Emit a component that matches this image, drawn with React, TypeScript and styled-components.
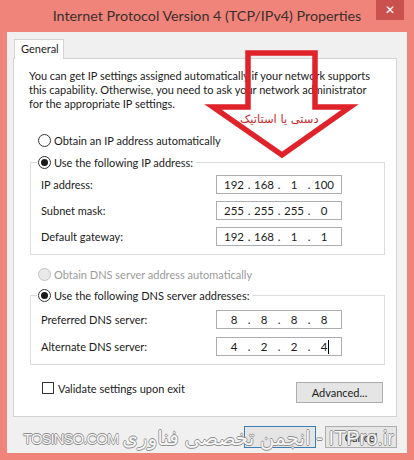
import styled, { createGlobalStyle } from 'styled-components';

const GlobalStyle = createGlobalStyle`
  html, body {
    margin: 0;
    padding: 0;
  }
  body {
    width: 414px;
    height: 460px;
    overflow: hidden;
    font-family: Lato, "Noto Sans", "DejaVu Sans", sans-serif;
    font-size: 11px;
    color: #1b1b1b;
  }
  * {
    box-sizing: border-box;
  }
`;

const Window = styled.div`
  position: relative;
  width: 414px;
  height: 460px;
  background: #f0847a;
  display: flex;
  flex-direction: column;
  padding: 0 7px 7px;
`;

const TitleBar = styled.div`
  height: 32px;
  margin: 0 -7px;
  display: flex;
  align-items: flex-start;
`;

const Title = styled.h1`
  flex: 1;
  min-width: 0;
  margin: 0;
  padding-left: 38px;
  text-align: center;
  font-size: 14.3px;
  font-weight: normal;
  line-height: 32px;
  color: #3b2e2c;
  white-space: nowrap;
`;

const CloseButton = styled.button`
  flex: none;
  margin-right: 10px;
  width: 28px;
  height: 20px;
  padding: 0;
  border: 0;
  background: #c9514e;
  color: #fff;
  font-family: "DejaVu Sans", sans-serif;
  font-size: 12px;
  line-height: 20px;
`;

const Client = styled.div`
  flex: 1;
  background: #f0f0f0;
  display: flex;
  flex-direction: column;
  padding: 7px 10px 5px 6px;
`;

const TabStrip = styled.div`
  display: flex;
  padding-left: 1px;
  margin-bottom: -1px;
  position: relative;
  z-index: 1;
`;

const Tab = styled.div`
  width: 50px;
  height: 20px;
  padding-left: 6px;
  border: 1px solid #d3d3d3;
  border-bottom: none;
  background: #fff;
  line-height: 18px;
`;

const Panel = styled.div`
  background: #fff;
  border: 1px solid #d3d3d3;
  padding: 10px 11px 13px 15px;
  display: flex;
  flex-direction: column;
`;

const Intro = styled.p`
  margin: 0 0 22px;
  line-height: 14px;
  white-space: nowrap;
`;

const RadioRow = styled.label<{ $gap?: number }>`
  display: flex;
  align-items: center;
  gap: 3px;
  height: 15px;
  margin-left: 9px;
  margin-bottom: ${(p) => p.$gap ?? 0}px;
`;

const Radio = styled.span<{ $checked?: boolean; $disabled?: boolean }>`
  width: 13px;
  height: 13px;
  border-radius: 50%;
  border: 1px solid ${(p) => (p.$disabled ? '#c2c2c2' : '#333')};
  background: ${(p) => (p.$disabled ? '#e9e9e9' : '#fff')};
  display: flex;
  align-items: center;
  justify-content: center;

  &::after {
    content: '';
    display: ${(p) => (p.$checked ? 'block' : 'none')};
    width: 7px;
    height: 7px;
    border-radius: 50%;
    background: #1a1a1a;
  }
`;

const RadioText = styled.span<{ $disabled?: boolean }>`
  color: ${(p) => (p.$disabled ? '#9b9b9b' : 'inherit')};
  white-space: nowrap;
`;

const Group = styled.fieldset<{ $padTop: number; $rowGap: number; $after: number }>`
  margin: 0 0 ${(p) => p.$after}px 1px;
  padding: ${(p) => p.$padTop}px 10px 8px 10px;
  border: 1px solid #dcdcdc;
  min-width: 0;

  .rows {
    display: grid;
    grid-template-columns: 175px 126px;
    row-gap: ${(p) => p.$rowGap}px;
    align-items: center;
  }
`;

const Legend = styled.legend`
  display: flex;
  align-items: center;
  gap: 3px;
  margin-left: -4px;
  padding: 0 3px 0 1px;
  line-height: 15px;
`;

const FieldLabel = styled.span`
  white-space: nowrap;
`;

const IpBox = styled.div`
  height: 19px;
  border: 1px solid #acadb3;
  background: #fff;
  display: flex;
  align-items: center;
  padding-left: 5px;
  position: relative;
  font-size: 11.5px;
`;

const Octet = styled.span`
  width: 24px;
  text-align: center;
`;

const Dot = styled.span`
  width: 6px;
  text-align: center;
`;

const Caret = styled.span`
  position: absolute;
  left: 111px;
  top: 2px;
  width: 1px;
  height: 14px;
  background: #000;
`;

const BottomRow = styled.div`
  display: flex;
  justify-content: space-between;
  align-items: flex-start;
  margin-right: 2px;
`;

const CheckRow = styled.label`
  display: flex;
  align-items: center;
  gap: 4px;
  margin-left: 13px;
  height: 12px;
`;

const CheckBox = styled.span`
  width: 12px;
  height: 12px;
  border: 1px solid #333;
  background: #fff;
`;

const Button = styled.button<{ $width: number; $height: number; $focused?: boolean }>`
  width: ${(p) => p.$width}px;
  height: ${(p) => p.$height}px;
  padding: 0;
  border: 1px solid ${(p) => (p.$focused ? '#3c7fb1' : '#adadad')};
  background: #e5e5e5;
  color: #1b1b1b;
  font-family: inherit;
  font-size: 11px;
`;

const DialogButtons = styled.div`
  display: flex;
  justify-content: flex-end;
  gap: 9px;
  margin-top: 9px;
`;

const Arrow = styled.svg`
  position: absolute;
  left: 0;
  top: 0;
  pointer-events: none;
`;

const ArrowNote = styled.span`
  position: absolute;
  left: 240px;
  top: 112px;
  direction: rtl;
  font-family: "DejaVu Sans", sans-serif;
  font-size: 11.5px;
  color: #c42a2c;
  white-space: nowrap;
`;

const Watermark = styled.div`
  position: absolute;
  left: 23px;
  top: 426px;
  width: 371px;
  display: flex;
  justify-content: space-between;
  align-items: center;
  pointer-events: none;
  color: #f6f6f6;
  text-shadow: -0.7px 0 #8d8d8d, 0.7px 0 #8d8d8d, 0 -0.7px #8d8d8d, 0 0.7px #8d8d8d;
  white-space: nowrap;
`;

const MarkSite = styled.span`
  font-family: "Liberation Sans", sans-serif;
  font-size: 15px;
  letter-spacing: -1px;
`;

const MarkForum = styled.span`
  direction: rtl;
  font-family: "Liberation Sans", "DejaVu Sans", sans-serif;
  font-size: 20px;
`;

type Ip = [string, string, string, string];

const IpField = ({ value, caret }: { value: Ip; caret?: boolean }) => (
  <IpBox>
    <Octet>{value[0]}</Octet>
    <Dot>.</Dot>
    <Octet>{value[1]}</Octet>
    <Dot>.</Dot>
    <Octet>{value[2]}</Octet>
    <Dot>.</Dot>
    <Octet>{value[3]}</Octet>
    {caret && <Caret />}
  </IpBox>
);

const ipRows: { label: string; value: Ip }[] = [
  { label: 'IP address:', value: ['192', '168', '1', '100'] },
  { label: 'Subnet mask:', value: ['255', '255', '255', '0'] },
  { label: 'Default gateway:', value: ['192', '168', '1', '1'] },
];

const dnsRows: { label: string; value: Ip }[] = [
  { label: 'Preferred DNS server:', value: ['8', '8', '8', '8'] },
  { label: 'Alternate DNS server:', value: ['4', '2', '2', '4'] },
];

export default function App() {
  return (
    <>
      <GlobalStyle />
      <Window>
        <TitleBar>
          <Title>Internet Protocol Version 4 (TCP/IPv4) Properties</Title>
          <CloseButton aria-label="Close">✕</CloseButton>
        </TitleBar>
        <Client>
          <TabStrip>
            <Tab>General</Tab>
          </TabStrip>
          <Panel>
            <Intro>
              You can get IP settings assigned automatically if your network supports
              <br />
              this capability. Otherwise, you need to ask your network administrator
              <br />
              for the appropriate IP settings.
            </Intro>

            <RadioRow $gap={7}>
              <Radio />
              <RadioText>Obtain an IP address automatically</RadioText>
            </RadioRow>

            <Group $padTop={5} $rowGap={7} $after={12}>
              <Legend>
                <Radio $checked />
                <RadioText>Use the following IP address:</RadioText>
              </Legend>
              <div className="rows">
                {ipRows.flatMap((row) => [
                  <FieldLabel key={row.label}>{row.label}</FieldLabel>,
                  <IpField key={`${row.label}-ip`} value={row.value} />,
                ])}
              </div>
            </Group>

            <RadioRow $gap={6}>
              <Radio $disabled />
              <RadioText $disabled>Obtain DNS server address automatically</RadioText>
            </RadioRow>

            <Group $padTop={7} $rowGap={8} $after={17}>
              <Legend>
                <Radio $checked />
                <RadioText>Use the following DNS server addresses:</RadioText>
              </Legend>
              <div className="rows">
                {dnsRows.flatMap((row, i) => [
                  <FieldLabel key={row.label}>{row.label}</FieldLabel>,
                  <IpField key={`${row.label}-ip`} value={row.value} caret={i === 1} />,
                ])}
              </div>
            </Group>

            <BottomRow>
              <CheckRow>
                <CheckBox />
                <span>Validate settings upon exit</span>
              </CheckRow>
              <Button $width={87} $height={21}>
                Advanced...
              </Button>
            </BottomRow>
          </Panel>
          <DialogButtons>
            <Button $width={72} $height={22} $focused aria-label="OK" />
            <Button $width={72} $height={22}>
              Cancel
            </Button>
          </DialogButtons>
        </Client>

        <Arrow width="414" height="460" viewBox="0 0 414 460">
          <polygon
            points="248,53 315,53 315,107 350,107 282,155 213,107 248,107"
            fill="none"
            stroke="#e0222a"
            strokeWidth="5.5"
            strokeLinejoin="miter"
          />
        </Arrow>
        <ArrowNote>دستی یا استاتیک</ArrowNote>

        <Watermark>
          <MarkSite>TOSINSO.COM</MarkSite>
          <MarkForum>ITPro.ir - انجمن تخصصی فناوری</MarkForum>
        </Watermark>
      </Window>
    </>
  );
}
